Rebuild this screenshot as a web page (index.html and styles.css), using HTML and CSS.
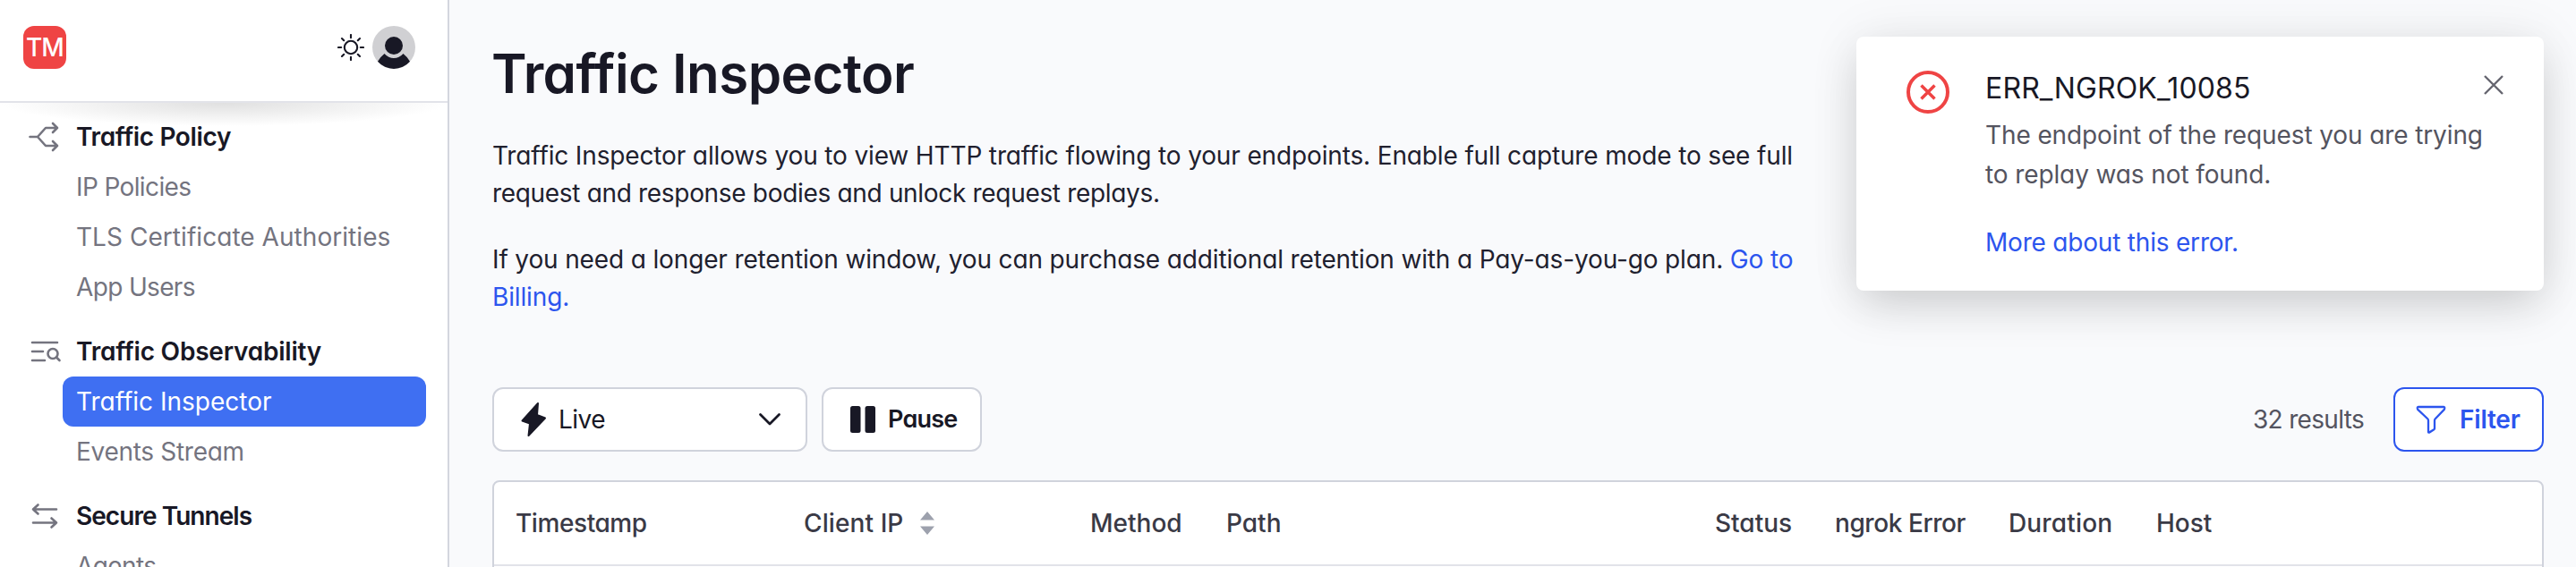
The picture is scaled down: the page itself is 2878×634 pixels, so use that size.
FILE: index.html
```html
<!DOCTYPE html>
<html lang="en">
<head>
<meta charset="utf-8">
<title>Traffic Inspector</title>
<link rel="stylesheet" href="styles.css">
</head>
<body>
<div class="app">
  <aside class="sidebar">
    <header class="account">
      <div class="logo">TM</div>
      <svg class="sun" viewBox="0 0 30 30" width="30" height="30"><circle cx="15" cy="15" r="7.2"/><path d="M15 1v3.2M15 25.800V29M1 15h3.2M25.800 15H29M5 5l2.200 2.200M22.800 22.800L25 25M5 25l2.200-2.200M22.800 7.200L25 5"/></svg>
      <svg class="avatar" viewBox="0 0 48 48" width="48" height="48"><circle cx="24" cy="24" r="24" fill="#d0d0d3"/><circle cx="24" cy="22" r="10" fill="#181825"/><path d="M13.500 31Q8.500 35 6 39.800A24 24 0 0 0 42 39.800Q39.500 35 34.500 31Q30 36 24 36T13.500 31Z" fill="#181825"/></svg>
    </header>
    <nav class="nav">
      <section class="group">
        <h2 class="row head ls-policy"><svg class="icon" viewBox="0 0 36 36" width="36" height="36"><path d="M3.500 18H12L21 8H34M12 18l9 10H34M29 3l5 5-5 5M29 23l5 5-5 5"/></svg>Traffic Policy</h2>
        <a class="row ls-ip">IP Policies</a>
        <a class="row ls-tls">TLS Certificate Authorities</a>
        <a class="row ls-users">App Users</a>
      </section>
      <section class="group">
        <h2 class="row head ls-obs"><svg class="icon" viewBox="0 0 36 36" width="36" height="36"><path d="M6 8h28M6 18h12M6 28h14"/><circle cx="29" cy="20.500" r="5.500"/><path d="M33 24.500L36.500 28"/></svg>Traffic Observability</h2>
        <a class="row active">Traffic Inspector</a>
        <a class="row ls-events">Events Stream</a>
      </section>
      <section class="group">
        <h2 class="row head ls-tunnels"><svg class="icon" viewBox="0 0 36 36" width="36" height="36"><path d="M7 10.500h26M12.500 5.500L7 10.500l5.500 5M7 25.500h26M27.500 20.500l5.500 5-5.500 5"/></svg>Secure Tunnels</h2>
        <a class="row ls-ip">Agents</a>
      </section>
    </nav>
  </aside>
  <main class="main">
    <h1 class="title">Traffic Inspector</h1>
    <p class="lead">Traffic Inspector allows you to view HTTP traffic flowing to your endpoints. Enable full capture mode to see full<br><span class="tight">request and response bodies and unlock request replays.</span></p>
    <p class="lead">If you need a longer retention window, you can purchase additional retention with a Pay-as-you-go plan. <a class="link">Go to<br>Billing.</a></p>
    <div class="toolbar">
      <div class="control select">
        <svg class="bolt" viewBox="0 0 30 46" width="30" height="46"><path d="M20 5L2.500 24.500l8.500 3L9.500 41 28 21.500l-9-3.500z"/></svg>
        <span class="live">Live</span>
        <svg class="chevron" viewBox="0 0 26 16" width="26" height="16"><path d="M2.500 2.500L13 13 23.500 2.500"/></svg>
      </div>
      <button class="control pause"><svg viewBox="0 0 28 30" width="28" height="30"><rect width="11.500" height="30" rx="2.500"/><rect x="16.500" width="11.500" height="30" rx="2.500"/></svg><span>Pause</span></button>
      <span class="results">32 results</span>
      <button class="control filter"><svg viewBox="0 0 36 36" width="36" height="36"><path d="M4 4h28q1.500 0 1.200 1.500l-.4 1.300-10 10.400q-.8.800-.8 2V28q0 .8-.7 1.300l-5.300 3.300q-1 .4-1-.8V19.200q0-1.200-.8-2L3.200 6.800 2.800 5.500Q2.500 4 4 4z"/></svg><span>Filter</span></button>
    </div>
    <div class="table">
      <div class="thead">
        <span class="th-time">Timestamp</span>
        <span class="th-ip">Client IP <svg viewBox="0 0 16 26" width="16" height="26"><path d="M8 0l8 9.500H0zM8 26l8-9.500H0z"/></svg></span>
        <span>Method</span>
        <span>Path</span>
        <span>Status</span>
        <span class="th-error">ngrok Error</span>
        <span class="th-wide">Duration</span>
        <span>Host</span>
      </div>
    </div>
  </main>
  <div class="toast">
    <svg class="toast-icon" viewBox="0 0 48 48" width="48" height="48"><circle cx="24" cy="24" r="22"/><path d="M16.500 16.500l15 15M31.500 16.500l-15 15"/></svg>
    <div class="toast-body">
      <h3 class="toast-title">ERR_NGROK_10085</h3>
      <p class="toast-text">The endpoint of the request you are trying<br>to replay was not found.</p>
      <a class="link toast-link">More about this error.</a>
    </div>
    <svg class="close" viewBox="0 0 24 24" width="24" height="24"><path d="M2 2l20 20M22 2L2 22"/></svg>
  </div>
</div>
</body>
</html>
```
FILE: styles.css
```css
* { box-sizing: border-box; }
body { margin: 0; font: 400 28px/42px Inter, "Liberation Sans", sans-serif; font-feature-settings: "cv11"; color: #20202e; background: #f9fafc; }
h1, h2, h3, p { margin: 0; font-size: inherit; }
svg { fill: none; flex: none; }
.app { display: flex; width: 2878px; height: 634px; overflow: hidden; position: relative; }
.sidebar { width: 502px; flex: none; height: 634px; overflow: hidden; background: #fff; border-right: 2px solid #d3d6de; }
.account { height: 115px; border-bottom: 2px solid #e2e3e9; display: flex; align-items: flex-start; padding: 29px 36px 0 26px; }
.logo { width: 48px; height: 48px; border-radius: 12px; background: #ef4444; color: #fff; font-weight: 500; font-size: 28px; line-height: 48px; text-align: center; letter-spacing: -1px; margin-right: auto; }
.sun { margin: 9px 9px 0 0; stroke: #181825; stroke-width: 2.1; stroke-linecap: round; }
.nav { padding: 10px 24px 0 0; background: radial-gradient(ellipse 250px 26px at 250px 0, #e0e0e0, rgba(255,255,255,0)) no-repeat; }
.group { margin-bottom: 16px; }
.row { height: 56px; line-height: 56px; margin-left: 70px; padding-left: 15px; display: flex; align-items: center; color: #74747f; white-space: nowrap; }
.head { margin-left: 0; padding-left: 30px; font-weight: 600; color: #181825; }
.icon { width: 36px; margin-right: 19px; overflow: visible; stroke: #74747f; stroke-width: 2.6; stroke-linecap: round; stroke-linejoin: round; }
.ls-policy { letter-spacing: -.37px; }
.ls-ip { letter-spacing: -.62px; }
.ls-tls { letter-spacing: .05px; }
.ls-users { letter-spacing: -.65px; }
.ls-obs { letter-spacing: -.22px; }
.ls-events { letter-spacing: -.3px; }
.ls-tunnels { letter-spacing: -.95px; }
.active { background: #3f6ff2; color: #fff; border-radius: 12px; letter-spacing: 0; }
.main { flex: 1; padding: 46px 36px 0 48px; }
.title { font-size: 60px; line-height: 72px; font-weight: 600; color: #181825; letter-spacing: -.55px; margin: 0 0 35px -1px; }
.lead { letter-spacing: -.14px; margin-bottom: 32px; white-space: nowrap; }
.tight { letter-spacing: -.32px; }
.link { color: #2c55ee; }
.toolbar { display: flex; align-items: center; margin-top: 80px; height: 72px; }
.control { height: 72px; border: 2px solid #d0d3dc; border-radius: 12px; background: #fff; display: flex; align-items: center; font: inherit; font-feature-settings: inherit; color: #181825; }
.select { width: 352px; padding: 0 27px 0 29px; margin-right: 16px; }
.bolt { fill: #181825; stroke: #181825; stroke-width: 2; stroke-linejoin: round; }
.live { margin-left: 13px; flex: 1; letter-spacing: -.5px; }
.chevron { stroke: #181825; stroke-width: 2.8; stroke-linecap: round; stroke-linejoin: round; }
.pause { width: 179px; padding: 0 0 0 30px; gap: 14px; font-weight: 600; font-size: 27px; letter-spacing: -.8px; }
.pause svg { fill: #181825; }
.results { margin-left: auto; margin-right: 33px; color: #54545f; letter-spacing: -.68px; }
.filter { width: 168px; padding: 0 0 0 22px; gap: 14px; border-color: #2c55ee; color: #2c55ee; font-weight: 600; letter-spacing: -.2px; }
.filter svg { stroke: #2c55ee; stroke-width: 2.3; }
.table { margin-top: 32px; height: 120px; background: #fff; border: 2px solid #d0d3dc; border-radius: 8px; }
.thead { height: 94px; border-bottom: 2px solid #e2e3e9; padding-left: 24px; display: grid; grid-template-columns: 322px 320px 152px 546px 134px 194px 165px 1fr; align-items: center; font-weight: 500; color: #3a3a46; white-space: nowrap; }
.th-time, .th-error { letter-spacing: -.42px; }
.th-wide { letter-spacing: .15px; }
.th-ip { display: flex; align-items: center; gap: 19px; letter-spacing: .1px; }
.th-ip svg { fill: #9da1ad; }
.toast { position: absolute; left: 2074px; top: 41px; width: 768px; height: 284px; padding: 38px 48px 0 56px; background: #fff; border-radius: 8px; display: flex; align-items: flex-start; box-shadow: 0 0 60px rgba(0,0,0,.07), 0 20px 50px -4px rgba(0,0,0,.15); }
.toast-icon { stroke: #ef4444; stroke-width: 4; }
.toast-icon path { stroke-width: 3.5; }
.toast-body { margin-left: 40px; flex: 1; color: #54545f; white-space: nowrap; }
.toast-title { font-size: 32px; font-weight: 400; line-height: 40px; letter-spacing: .15px; color: #181825; }
.toast-text { line-height: 44px; letter-spacing: -.11px; margin: 10px 0 33px; }
.toast-link { display: block; line-height: 42px; letter-spacing: -.2px; }
.close { margin-top: 4px; stroke: #666670; stroke-width: 2.4; }
```
